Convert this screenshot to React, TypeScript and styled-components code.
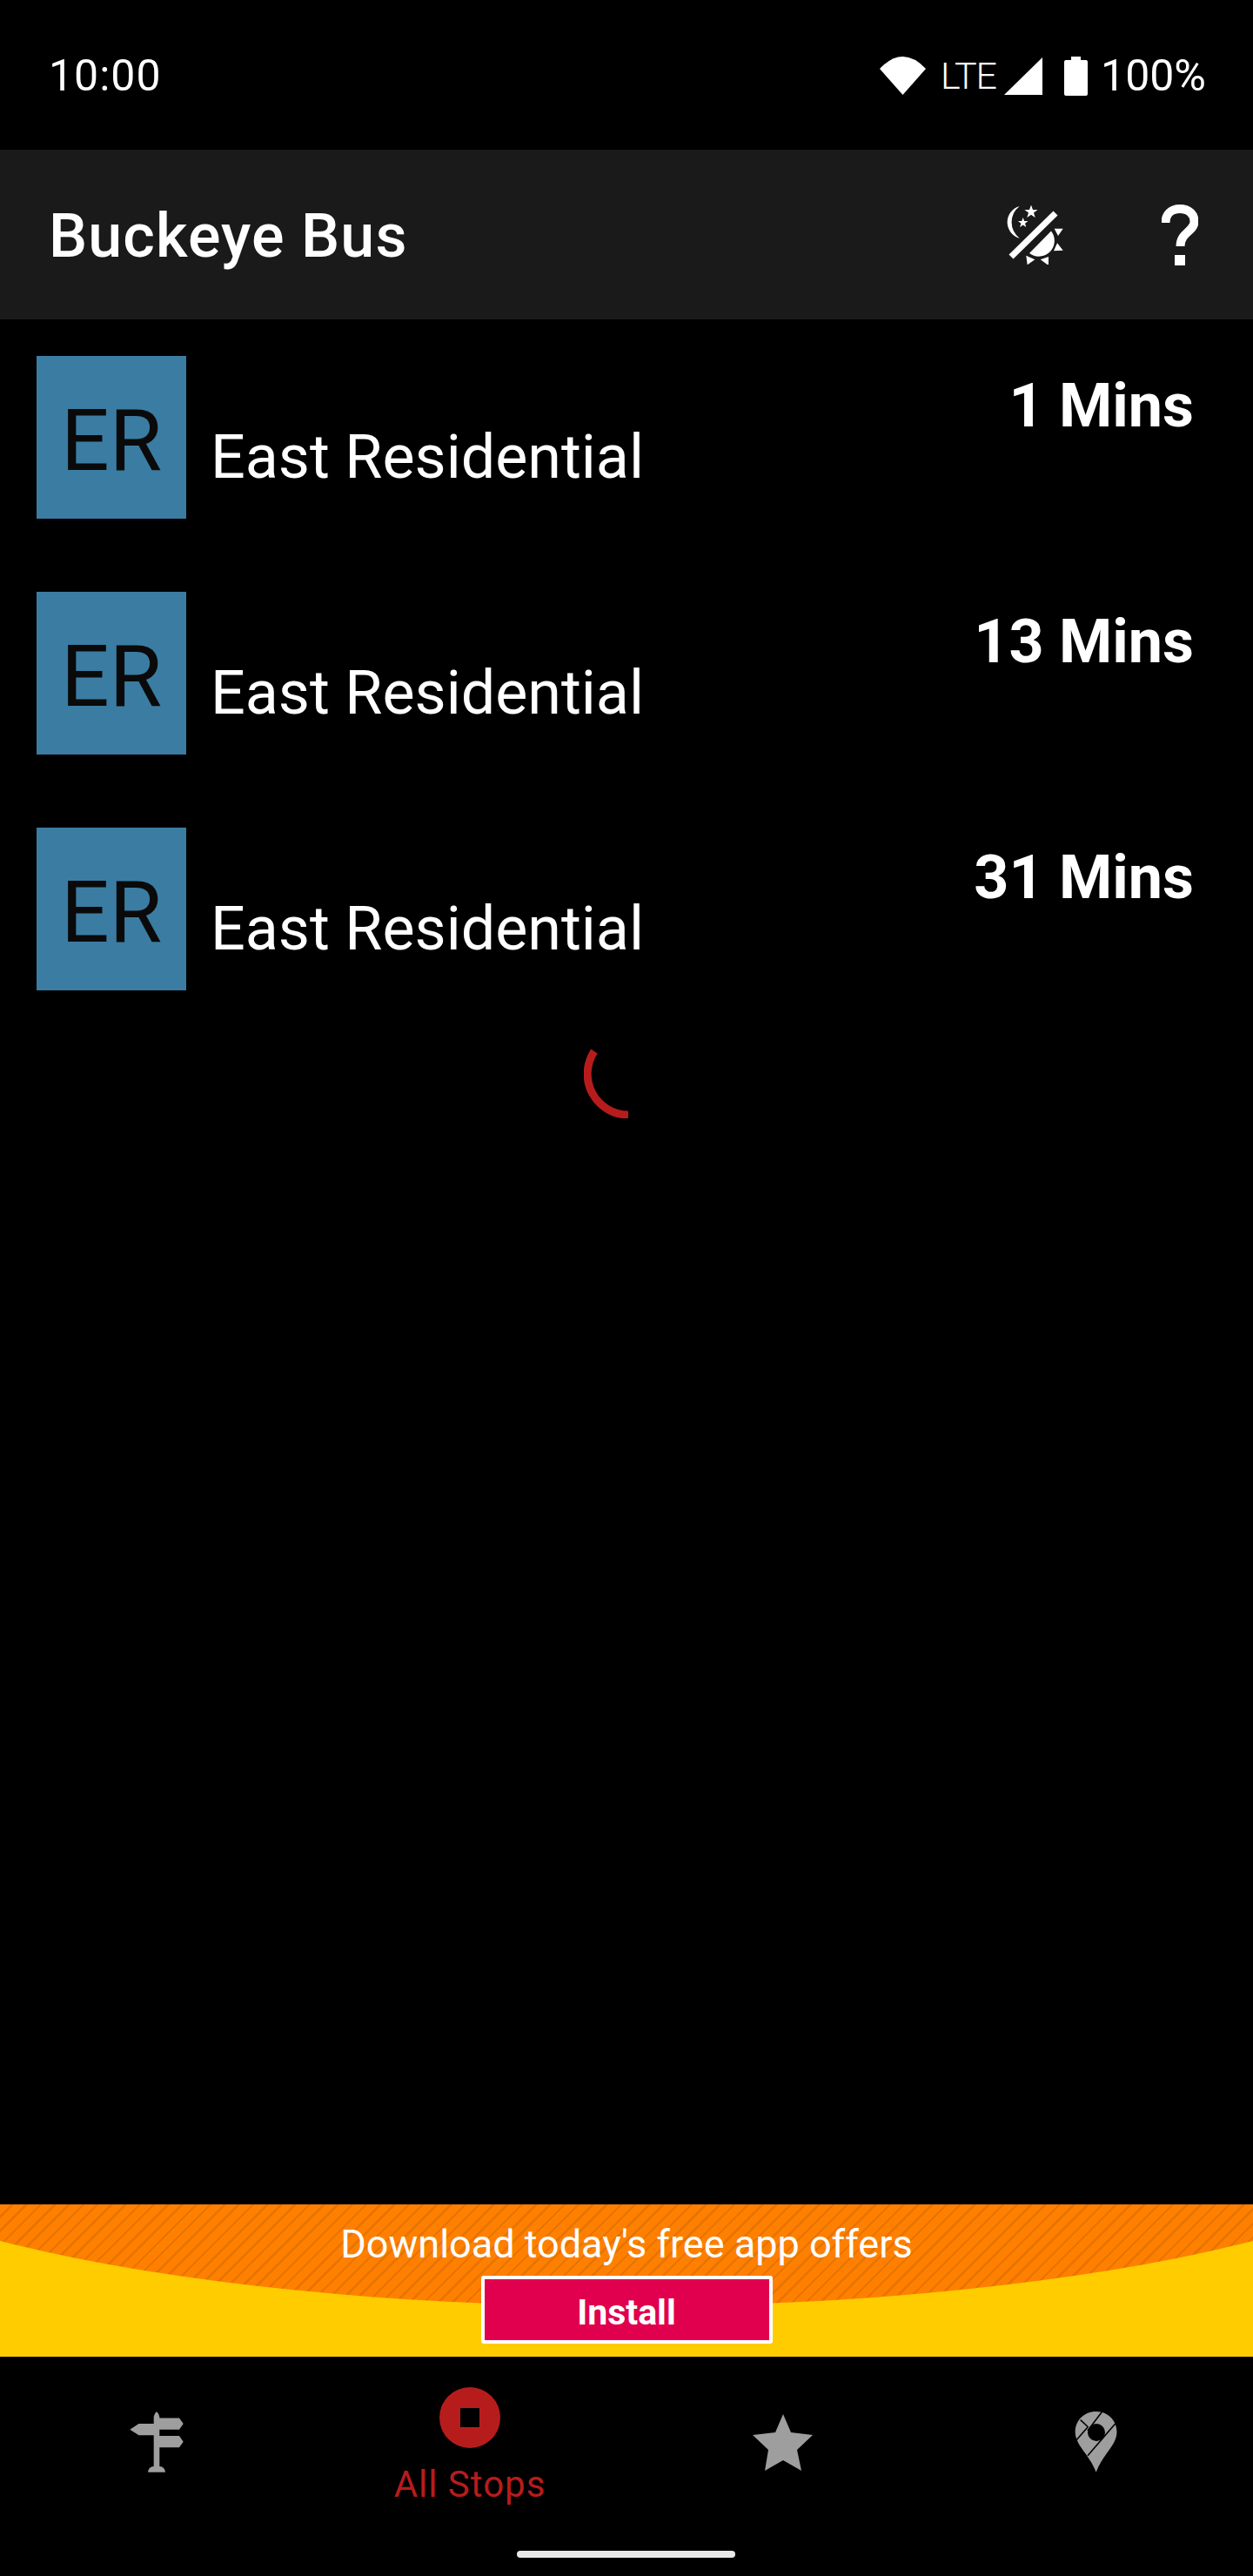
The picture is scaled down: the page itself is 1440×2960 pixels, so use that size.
import React from 'react';
import styled, { createGlobalStyle } from 'styled-components';

const GlobalStyle = createGlobalStyle`
  html, body {
    margin: 0;
    padding: 0;
    background: #000;
  }
  * {
    box-sizing: border-box;
  }
`;

const arrivals = ['1 Mins', '13 Mins', '31 Mins'];

const App: React.FC = () => (
  <>
    <GlobalStyle />
    <Screen>
      <StatusBar>
        <Clock>10:00</Clock>
        <StatusIcons>
          <svg width="53" height="44" viewBox="0 0 53 44">
            <path d="M26.5 44 L0 14 Q26.5 -14 53 14 Z" fill="#fff" />
          </svg>
          <NetworkLabel>LTE</NetworkLabel>
          <SignalSvg width="44" height="43" viewBox="0 0 44 43">
            <path d="M44 0 V43 H0 Z" fill="#fff" />
          </SignalSvg>
          <BatterySvg width="27" height="45" viewBox="0 0 27 45">
            <path
              d="M8 0 H19 V4 H25 Q27 4 27 6 V43 Q27 45 25 45 H2 Q0 45 0 43 V6 Q0 4 2 4 H8 Z"
              fill="#fff"
            />
          </BatterySvg>
          <BatteryLevel>100%</BatteryLevel>
        </StatusIcons>
      </StatusBar>

      <Header>
        <Title>Buckeye Bus</Title>
        <HeaderActions>
          <svg width="68" height="68" viewBox="24 15 68 68" fill="#fff">
            <path d="M41.7 16 A19 19 0 0 0 41.7 52.7 A23 23 0 0 1 41.7 16 Z" />
            <polygon points="55,14.5 57,20 62.5,20 58,23.5 59.7,29 55,25.7 50.3,29 52,23.5 47.5,20 53,20" />
            <polygon points="45.7,29 47.2,33 51.5,33 48,35.7 49.3,40 45.7,37.5 42.1,40 43.4,35.7 39.9,33 44.2,33" />
            <path d="M29.5 71.5 L80.5 21.5 L85.5 26.5 L34.5 76.5 Z" />
            <path d="M53 70 L78 44.5 A18 18 0 0 1 53 70 Z" />
            <polygon points="81.7,41.7 91.7,41.7 86,50" />
            <polygon points="85,58.3 91.7,66.7 81,67.3" />
            <polygon points="65.7,77.3 75,74 75,84" />
            <polygon points="49.3,72.7 59.3,77.3 50.7,83.3" />
          </svg>
          <HelpSvg width="42" height="70" viewBox="0 0 42 70">
            <path
              d="M4.5 21 C4.5 11 11 5 21 5 C31 5 37.5 11 37.5 19.5 C37.5 31 21.5 32 21.5 48"
              fill="none"
              stroke="#fff"
              strokeWidth="10"
            />
            <rect x="15" y="58" width="12" height="12" fill="#fff" />
          </HelpSvg>
        </HeaderActions>
      </Header>

      <Content>
        <ArrivalList>
          {arrivals.map((time, i) => (
            <ArrivalRow key={i}>
              <RouteBadge>ER</RouteBadge>
              <RouteName>East Residential</RouteName>
              <ArrivalTime>{time}</ArrivalTime>
            </ArrivalRow>
          ))}
        </ArrivalList>
        <SpinnerWrap>
          <svg width="102" height="102" viewBox="0 0 102 102">
            <path
              d="M12 25 A47 47 0 0 0 51 98"
              fill="none"
              stroke="#b71c1c"
              strokeWidth="9"
            />
          </svg>
        </SpinnerWrap>
      </Content>

      <AdBanner>
        <AdText>Download today's free app offers</AdText>
        <InstallButton>Install</InstallButton>
      </AdBanner>

      <BottomNav>
        <NavItem>
          <svg width="70" height="70" viewBox="25 21 70 70" fill="#9e9e9e">
            <path d="M56.7 27 Q60 16 63.3 27 V28.5 H86 L90.7 35 L86 41.7 H63.3 V49 H86 L90.7 55.7 L86 62.3 H63.3 V84 H56.7 V48.3 H39.5 L29.3 41.7 L39.5 35 H56.7 Z" />
            <path d="M50 90.7 Q51 84 56.7 84 H63.3 Q69 84 70 90.7 Z" />
          </svg>
        </NavItem>
        <NavItem>
          <ActiveIcon />
          <NavLabel>All Stops</NavLabel>
        </NavItem>
        <NavItem>
          <svg width="70" height="70" viewBox="0 0 70 70">
            <polygon
              points="35,3 44,24 69,27 51,44 56,68 35,56 14,68 18,44 0,27 26,24"
              fill="#9e9e9e"
            />
          </svg>
        </NavItem>
        <NavItem>
          <svg width="70" height="70" viewBox="5 21 70 70">
            <path
              d="M39.7 21 C53 21 63.5 31 63.5 44.5 C63.5 60 47 70 39.7 90.7 C32 70 15.7 60 15.7 44.5 C15.7 31 26 21 39.7 21 Z"
              fill="#9e9e9e"
            />
            <circle cx="40" cy="45" r="10" fill="#000" />
            <path
              d="M46.7 21 L30 43 M21.7 30.7 L30.7 39 M16 55 L30 39 M61.7 35 L30 71.7"
              stroke="#000"
              strokeWidth="1.6"
              fill="none"
            />
          </svg>
        </NavItem>
        <HomeIndicator />
      </BottomNav>
    </Screen>
  </>
);

export default App;

const Screen = styled.div`
  width: 1440px;
  height: 2960px;
  display: flex;
  flex-direction: column;
  background: #000;
  font-family: Roboto, 'Liberation Sans', sans-serif;
  color: #fff;
  overflow: hidden;
`;

const StatusBar = styled.div`
  height: 172px;
  flex: none;
  display: flex;
  align-items: center;
  justify-content: space-between;
  padding: 2px 54px 0 56px;
`;

const Clock = styled.span`
  font-size: 50px;
  line-height: 1;
  letter-spacing: 1px;
`;

const StatusIcons = styled.div`
  display: flex;
  align-items: center;
`;

const NetworkLabel = styled.span`
  margin-left: 17px;
  font-size: 43px;
  font-weight: 300;
  line-height: 1;
  letter-spacing: -1px;
`;

const SignalSvg = styled.svg`
  margin-left: 9px;
`;

const BatterySvg = styled.svg`
  margin-left: 25px;
`;

const BatteryLevel = styled.span`
  margin-left: 15px;
  font-size: 50px;
  line-height: 1;
`;

const Header = styled.header`
  height: 195px;
  flex: none;
  display: flex;
  align-items: center;
  justify-content: space-between;
  padding: 0 63px 0 56px;
  background: #1a1a1a;
`;

const Title = styled.h1`
  margin: 2px 0 0;
  font-size: 70px;
  font-weight: 500;
  letter-spacing: 1.1px;
`;

const HeaderActions = styled.div`
  display: flex;
  align-items: center;
  gap: 113px;
`;

const HelpSvg = styled.svg`
  display: block;
`;

const Content = styled.main`
  flex: 1;
  padding-top: 42px;
`;

const ArrivalList = styled.div`
  display: flex;
  flex-direction: column;
  gap: 84px;
`;

const ArrivalRow = styled.div`
  display: flex;
  padding: 0 68px 0 42px;
`;

const RouteBadge = styled.div`
  width: 172px;
  height: 187px;
  flex: none;
  display: flex;
  align-items: center;
  justify-content: center;
  padding-top: 8px;
  background: #3b7ca3;
  color: #0a0a0a;
  font-size: 98px;
`;

const RouteName = styled.div`
  align-self: flex-end;
  margin: 0 0 30px 28px;
  font-size: 70px;
`;

const ArrivalTime = styled.div`
  margin: 16px 0 0 auto;
  font-size: 70px;
  font-weight: 700;
`;

const SpinnerWrap = styled.div`
  display: flex;
  justify-content: center;
  margin-top: 45px;
  padding-left: 4px;

  svg {
    display: block;
  }
`;

const AdBanner = styled.div`
  position: relative;
  height: 175px;
  flex: none;
  display: flex;
  flex-direction: column;
  align-items: center;
  background: #ffcc00;
  overflow: hidden;

  &::before {
    content: '';
    position: absolute;
    inset: 0;
    background: repeating-linear-gradient(
      135deg,
      #ff8000 0,
      #ff8000 9px,
      #e87400 9px,
      #e87400 11.5px
    );
    clip-path: ellipse(1000px 245px at 50% -128px);
  }
`;

const AdText = styled.div`
  position: relative;
  margin-top: 20px;
  font-size: 45px;
  line-height: 52px;
  white-space: nowrap;
`;

const InstallButton = styled.button`
  position: relative;
  width: 335px;
  height: 78px;
  margin-top: 10px;
  padding: 5px 0 0;
  border: 4px solid #fff;
  border-radius: 3px;
  background: #e0004d;
  color: #fff;
  font-family: inherit;
  font-size: 41px;
  font-weight: 700;
`;

const BottomNav = styled.nav`
  position: relative;
  height: 252px;
  flex: none;
  display: grid;
  grid-template-columns: repeat(4, 360px);
`;

const NavItem = styled.div`
  display: flex;
  flex-direction: column;
  align-items: center;
  padding-top: 63px;

  &:nth-child(2) {
    padding-top: 35px;
  }

  svg {
    display: block;
  }
`;

const ActiveIcon = styled.div`
  width: 70px;
  height: 70px;
  display: flex;
  align-items: center;
  justify-content: center;
  border-radius: 50%;
  background: #b71c1c;

  &::after {
    content: '';
    width: 22px;
    height: 22px;
    background: #000;
  }
`;

const NavLabel = styled.div`
  margin-top: 17px;
  color: #b71c1c;
  font-size: 42px;
  line-height: 50px;
  letter-spacing: 1px;
`;

const HomeIndicator = styled.div`
  position: absolute;
  left: 594px;
  bottom: 21px;
  width: 251px;
  height: 8px;
  border-radius: 4px;
  background: #e8e8e8;
`;
